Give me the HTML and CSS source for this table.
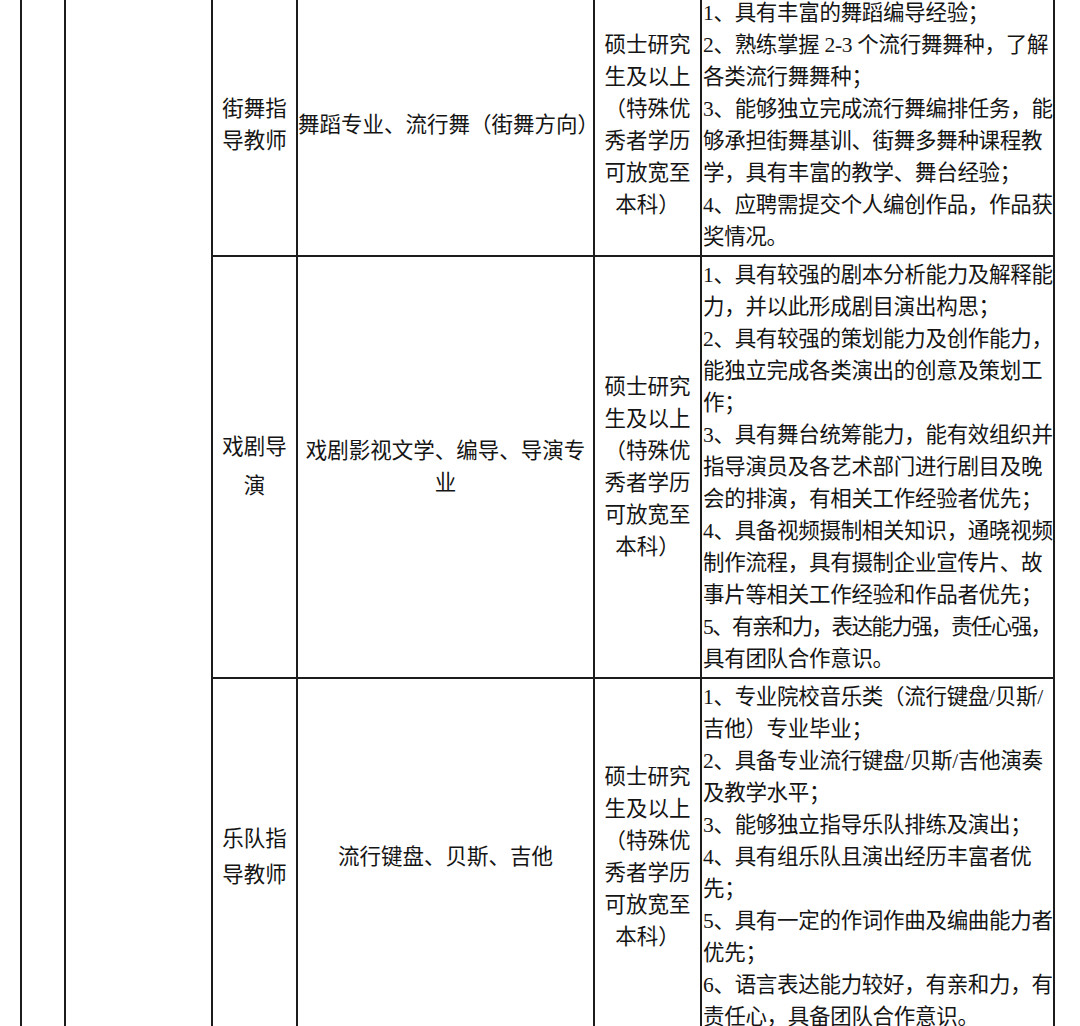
FILE: index.html
```html
<!DOCTYPE html>
<html lang="zh-CN">
<head>
<meta charset="utf-8">
<title>招聘岗位表</title>
<link rel="stylesheet" href="styles.css">
</head>
<body>
<table class="jobs">
  <colgroup>
    <col class="col-dept">
    <col class="col-unit">
    <col class="col-post">
    <col class="col-major">
    <col class="col-edu">
    <col class="col-req">
  </colgroup>
  <tbody>
    <tr>
      <td class="merged" rowspan="3"></td>
      <td class="merged" rowspan="3"></td>
      <td class="post">街舞指<br>导教师</td>
      <td class="major">舞蹈专业、流行舞（街舞方向）</td>
      <td class="edu">硕士研究<br>生及以上<br>（特殊优<br>秀者学历<br>可放宽至<br>本科）</td>
      <td class="req">1、具有丰富的舞蹈编导经验；<br>2、熟练掌握 2-3 个流行舞舞种，了解<br>各类流行舞舞种；<br>3、能够独立完成流行舞编排任务，能<br>够承担街舞基训、街舞多舞种课程教<br>学，具有丰富的教学、舞台经验；<br>4、应聘需提交个人编创作品，作品获<br>奖情况。</td>
    </tr>
    <tr>
      <td class="post post-drama">戏剧导<br>演</td>
      <td class="major">戏剧影视文学、编导、导演专<br>业</td>
      <td class="edu">硕士研究<br>生及以上<br>（特殊优<br>秀者学历<br>可放宽至<br>本科）</td>
      <td class="req">1、具有较强的剧本分析能力及解释能<br>力，并以此形成剧目演出构思；<br>2、具有较强的策划能力及创作能力，<br>能独立完成各类演出的创意及策划工<br>作；<br>3、具有舞台统筹能力，能有效组织并<br>指导演员及各艺术部门进行剧目及晚<br>会的排演，有相关工作经验者优先；<br>4、具备视频摄制相关知识，通晓视频<br>制作流程，具有摄制企业宣传片、故<br>事片等相关工作经验和作品者优先；<br><span class="squeeze">5、有亲和力，表达能力强，责任心强，</span><br>具有团队合作意识。</td>
    </tr>
    <tr>
      <td class="post post-band">乐队指<br>导教师</td>
      <td class="major">流行键盘、贝斯、吉他</td>
      <td class="edu">硕士研究<br>生及以上<br>（特殊优<br>秀者学历<br>可放宽至<br>本科）</td>
      <td class="req">1、专业院校音乐类（流行键盘/贝斯/<br>吉他）专业毕业；<br>2、具备专业流行键盘/贝斯/吉他演奏<br>及教学水平；<br>3、能够独立指导乐队排练及演出；<br>4、具有组乐队且演出经历丰富者优<br>先；<br>5、具有一定的作词作曲及编曲能力者<br>优先；<br>6、语言表达能力较好，有亲和力，有<br>责任心，具备团队合作意识。</td>
    </tr>
  </tbody>
</table>
</body>
</html>
```

FILE: styles.css
```css
html, body {
  margin: 0;
  padding: 0;
  background: #ffffff;
}

body {
  overflow: hidden;
  height: 1026px;
  font-family: "Liberation Serif", "Noto Sans CJK SC", serif;
  color: #151515;
}

.jobs {
  width: 1035px;
  table-layout: fixed;
  border-collapse: collapse;
  margin: -7px 0 0 20px;
  font-size: 21.5px;
  line-height: 32px;
}

.col-dept { width: 44px; }
.col-unit { width: 147px; }
.col-post { width: 85px; }
.col-major { width: 297px; }
.col-edu { width: 107px; }
.col-req { width: 353px; }

.jobs td {
  border: 2px solid #1c1c1c;
  padding: 2px 0;
  vertical-align: middle;
  text-align: center;
  white-space: nowrap;
  overflow: visible;
}

.jobs .req {
  text-align: left;
  padding-left: 1px;
  letter-spacing: -0.3px;
}

.jobs .req .squeeze {
  letter-spacing: -1.6px;
}

.post-drama {
  line-height: 39px;
}

.post-band {
  line-height: 36px;
}
```
